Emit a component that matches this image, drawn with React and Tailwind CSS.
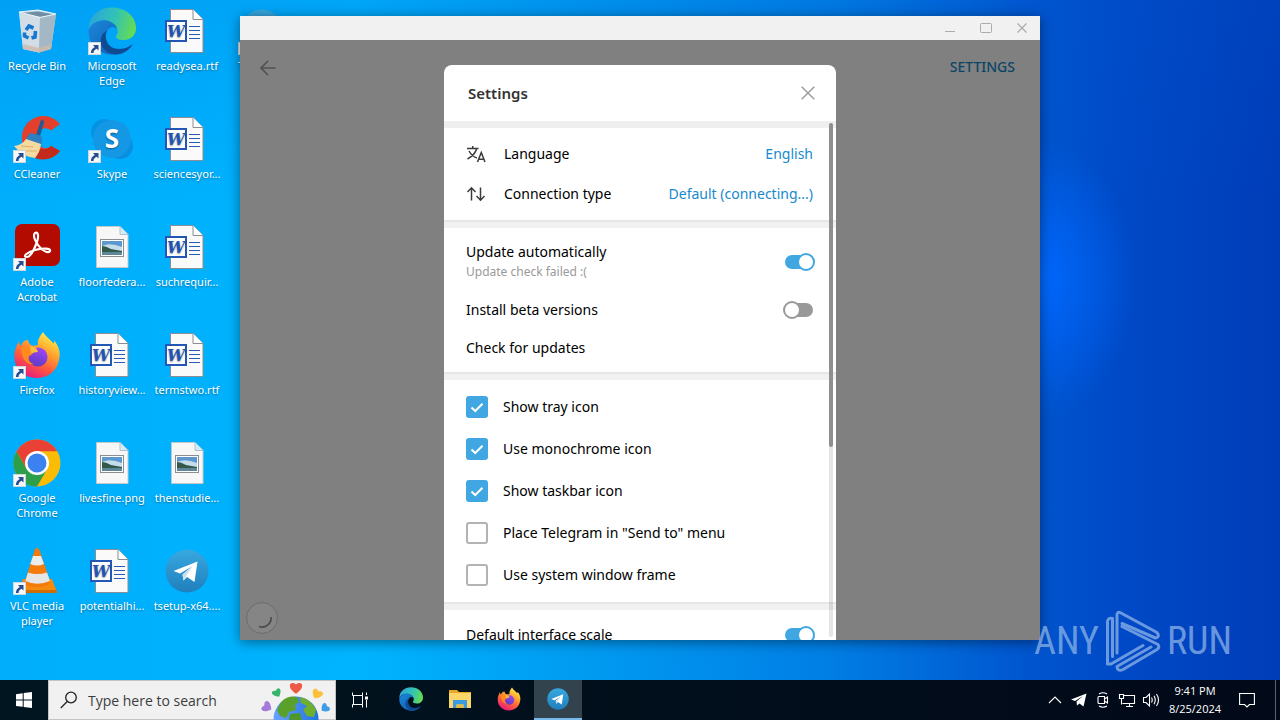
import React from 'react'

const word = (name) => ({ name, Icon: WordIcon })
const picture = (name) => ({ name, Icon: PictureIcon })

const columns = [
  [
    { name: 'Recycle Bin', Icon: RecycleIcon },
    { name: 'CCleaner', Icon: CCleanerIcon, shortcut: true },
    { name: 'Adobe Acrobat', Icon: AcrobatIcon, shortcut: true },
    { name: 'Firefox', Icon: FirefoxIcon, shortcut: true },
    { name: 'Google Chrome', Icon: ChromeIcon, shortcut: true },
    { name: 'VLC media player', Icon: VlcIcon, shortcut: true },
  ],
  [
    { name: 'Microsoft Edge', Icon: EdgeIcon, shortcut: true },
    { name: 'Skype', Icon: SkypeIcon, shortcut: true },
    picture('floorfedera...'),
    word('historyview...'),
    picture('livesfine.png'),
    word('potentialhi...'),
  ],
  [
    word('readysea.rtf'),
    word('sciencesyor...'),
    word('suchrequir...'),
    word('termstwo.rtf'),
    picture('thenstudie...'),
    { name: 'tsetup-x64....', Icon: TelegramIcon },
  ],
  [{ name: 'Telegram', Icon: TelegramIcon, shortcut: true }],
]

const checks = [
  { id: 'tray', label: 'Show tray icon', on: true },
  { id: 'mono', label: 'Use monochrome icon', on: true },
  { id: 'taskbar', label: 'Show taskbar icon', on: true },
  { id: 'sendto', label: 'Place Telegram in "Send to" menu', on: false },
  { id: 'frame', label: 'Use system window frame', on: false },
]

function RecycleIcon() {
  return (
    <svg viewBox="0 0 48 48" className="size-full">
      <path d="M6 5 L25 3 L43 7 L38 42 L26 45.500 L10 42 Z" fill="#b9d3e4" />
      <path d="M6 5 L27 10 L26 45.500 L10 42 Z" fill="#d3dde5" />
      <path d="M27 10 L43 7 L38 42 L26 45.500 Z" fill="#a3b7c5" />
      <path d="M8 6 L25 4.500 L41 7.500 L27 10 Z" fill="#6f8ea3" />
      <path d="M6 5 L25 3 L43 7 L27 10.500 Z" fill="none" stroke="#e8f3fa" strokeWidth="1.200" />
      <path d="M10 37 L26 41 L38.500 37 L38 42 L26 45.500 L10.500 42 Z" fill="#cdb9aa" opacity=".8" />
      <g fill="none" stroke="#1677d2" strokeWidth="3.600">
        <path d="M13 23 L16 19 L20.500 21" />
        <path d="M22.500 24 L22 30 L18.500 31" />
        <path d="M15.500 31 L11.500 29 L11.500 25.500" />
      </g>
    </svg>
  )
}

function CCleanerIcon() {
  return (
    <svg viewBox="0 0 48 48" className="size-full">
      <path d="M47 9 A 21.500 21.500 0 1 0 47 36 L38 31 A 9 10 0 1 1 38 15.500 Z" fill="#e2402c" />
      <path d="M47 36 A 21.500 21.500 0 0 1 22 43 L28 34 A 10.500 10.500 0 0 0 38 31 Z" fill="#c22a1c" />
      <path d="M28 5 L31.500 6 L27 21 L23 20 Z" fill="#1d5c96" />
      <path d="M18 18 L28 21 Q30 25 28 30 L13 25 Q14 20 18 18 Z" fill="#2f7fc0" />
      <path d="M13 24 L28 29 Q27 37 22 43 Q10 42 1 31 Q9 30 13 24 Z" fill="#f4d9a0" />
      <path d="M8 31 L20 32 M12 36 L24 36" stroke="#d9b36c" strokeWidth="1" />
    </svg>
  )
}

function AcrobatIcon() {
  return (
    <svg viewBox="0 0 48 48" className="size-full">
      <rect x="2" y="1" width="45" height="42" rx="7" fill="#b30b00" />
      <path
        d="M22 10 C25 8 26 13 24 19 C21 27 17 34 14 34 C9 34 14 29 22 27 C30 25 38 25 37 28 C36 31 29 28 25 22 C21 16 20 12 22 10 Z"
        fill="none"
        stroke="#fff"
        strokeWidth="2.200"
      />
    </svg>
  )
}

function FirefoxIcon() {
  return (
    <svg viewBox="0 0 48 48" className="size-full">
      <defs>
        <linearGradient id="ffBody" x1=".8" y1="0" x2=".25" y2="1">
          <stop offset="0" stopColor="#fff44f" />
          <stop offset=".35" stopColor="#ffa82e" />
          <stop offset=".65" stopColor="#ff5a3c" />
          <stop offset="1" stopColor="#e31587" />
        </linearGradient>
        <linearGradient id="ffCore" x1=".7" y1="0" x2=".3" y2="1">
          <stop offset="0" stopColor="#a045f5" />
          <stop offset="1" stopColor="#5b3bc4" />
        </linearGradient>
      </defs>
      <path
        d="M30 1 C33 6 37 8 40 12 C42 13 41 10 41 9 C46 16 48 21 46 29 C44 40 35 47 24 47 C11 47 2 38 1.500 27 C1 20 3 17 4 14 L6 10 C6 13 7 14 8 15 C9 11 12 9 15 9 C15 11 17 14 20 15 L25 14 C24 9 27 5 30 1 Z"
        fill="url(#ffBody)"
      />
      <circle cx="25" cy="26" r="9.500" fill="url(#ffCore)" />
      <path d="M8 17 C14 14 20 16 24 20 C20 20 20 24 16 25 C14 29 17 32 21 33 C14 34 9 29 8 17 Z" fill="#ff8a1e" />
      <path d="M17 15 C23 16 24 18 25 21 L18 22 Z" fill="#ffbd3d" />
    </svg>
  )
}

function ChromeIcon() {
  return (
    <svg viewBox="0 0 48 48" className="size-full">
      <circle cx="24" cy="24" r="23.500" fill="#fbbc05" />
      <path d="M3.600 12.200 A23.500 23.500 0 0 0 24 47.500 L34.200 29.900 L24 24 L13.800 29.900 Z" fill="#2d9f4a" />
      <path d="M3.600 12.200 A23.500 23.500 0 0 1 44.400 12.300 L24 12.300 L13.800 29.900 Z" fill="#e94235" />
      <circle cx="24" cy="24" r="12" fill="#fff" />
      <circle cx="24" cy="24" r="9.500" fill="#3b82f0" />
    </svg>
  )
}

function VlcIcon() {
  return (
    <svg viewBox="0 0 48 48" className="size-full">
      <path d="M10 32 L39 32 L44 45 L5 45 Z" fill="#f58a0c" />
      <path d="M5 43 L44 43 L44 46 L5 46 Z" fill="#cf6c05" />
      <path d="M22 2 Q24 0 26 2 L37 34 Q37 40 24 40 Q11 40 12 34 Z" fill="#f47b0a" />
      <path d="M20 9 L28 9 L31 17 Q24 20 17.300 17 Z" fill="#ededed" />
      <path d="M15 25.500 Q24 28.500 34 25.500 L37 34 Q24 39.500 12.300 34 Z" fill="#e5e5e5" />
    </svg>
  )
}

function EdgeIcon() {
  return (
    <svg viewBox="0 0 48 48" className="size-full">
      <defs>
        <linearGradient id="edgeTop" x1="0" y1=".3" x2="1" y2=".5">
          <stop offset="0" stopColor="#2aa5dc" />
          <stop offset=".55" stopColor="#33c3b4" />
          <stop offset="1" stopColor="#66dc50" />
        </linearGradient>
        <linearGradient id="edgeLow" x1="0" y1="0" x2="1" y2="1">
          <stop offset="0" stopColor="#1b86d8" />
          <stop offset="1" stopColor="#0e5eb4" />
        </linearGradient>
      </defs>
      <path d="M0.500 22 C1 9 11 0.500 24 0.500 C38 0.500 48 10 48 21 C48 29 42 33 36 33 C30 33 27 31 28 29 C31 26 30 20 24 16 C16 11 5 14 0.500 22 Z" fill="url(#edgeTop)" />
      <path d="M0.500 23 C4 14 16 11 23 15 C27 17 29 20 29 22 C24 17 18 22 18 29 C18 38 27 47 36 45 C22 52 0 44 0.500 23 Z" fill="url(#edgeLow)" />
      <path d="M19 24 C15 31 20 42 31 42 C38 42 42 39 44.500 37 C42 43 36 47 28 47.500 C18 47 11 39 13 31 C14 27 16 25 19 24 Z" fill="#0f4b93" />
    </svg>
  )
}

function SkypeIcon() {
  return (
    <svg viewBox="0 0 48 48" className="size-full">
      <circle cx="16" cy="17" r="13" fill="#0592e3" />
      <circle cx="32" cy="31" r="13" fill="#0a8fe0" />
      <circle cx="24" cy="24" r="19" fill="#1498e6" />
      <text x="24" y="33" textAnchor="middle" fontSize="26" fontWeight="700" fill="#fff" fontFamily="Open Sans, sans-serif">
        S
      </text>
    </svg>
  )
}

function WordIcon() {
  return (
    <svg viewBox="0 0 48 48" className="size-full">
      <path d="M7.500 2.500 H30 L40 12.500 V45.500 H7.500 Z" fill="#fafafa" stroke="#8a8d92" />
      <path d="M30 2.500 V12.500 H40" fill="#fff" stroke="#8a8d92" />
      <path d="M26 19.500 H37 M26 23.500 H37 M26 27.500 H37 M26 31.500 H37" stroke="#2c5ab4" strokeWidth="1.200" />
      <rect x="3" y="14" width="20" height="20" fill="#fff" stroke="#2457b4" strokeWidth="2" />
      <text x="13" y="30" textAnchor="middle" fontSize="16" fontWeight="700" fontStyle="italic" fill="#2253b0" fontFamily="DejaVu Serif, serif">
        W
      </text>
    </svg>
  )
}

function PictureIcon() {
  return (
    <svg viewBox="0 0 48 48" className="size-full">
      <path d="M8.500 3.500 H32 L40 11.500 V44.500 H8.500 Z" fill="#f7f7f7" stroke="#c5c8cb" />
      <path d="M32 3.500 V11.500 H40" fill="#d5e9f7" stroke="#b3c0c9" />
      <rect x="12.500" y="16.500" width="23" height="17" fill="#fff" stroke="#8a8f94" />
      <rect x="14" y="18" width="20" height="14" fill="#5d97cf" />
      <path d="M14 23 Q22 19 34 24 V28 H14 Z" fill="#c5ddeb" />
      <path d="M14 23 Q18 23 23 26 L34 28 V29 H14 Z" fill="#33594a" />
      <path d="M14 29 H34 V32 H14 Z" fill="#5f8798" />
    </svg>
  )
}

function TelegramIcon() {
  return (
    <svg viewBox="0 0 48 48" className="size-full">
      <defs>
        <linearGradient id="tgFill" x1="0" y1="0" x2="0" y2="1">
          <stop offset="0" stopColor="#38a8e0" />
          <stop offset="1" stopColor="#1f7fbd" />
        </linearGradient>
      </defs>
      <circle cx="24" cy="24" r="21.500" fill="url(#tgFill)" />
      <path d="M10.500 24 L34.500 14.500 L31.500 35 L24 30 L20.500 33.500 L19.500 27.500 L29 19.500 L17 26.500 Z" fill="#fff" />
      <path d="M19.500 27.500 L29 19.500 L23.500 28.500 L20.500 33.500 Z" fill="#c9dfee" />
    </svg>
  )
}

function ShortcutArrow() {
  return (
    <svg viewBox="0 0 13 13" className="absolute bottom-0 left-0 size-[13px]">
      <rect x=".5" y=".5" width="12" height="12" fill="#f6f7f8" stroke="#cfd6dc" />
      <path d="M5 3 H10.500 V8.500 L8.700 6.800 Q5.500 8 5.500 11 H3 Q2.700 7 6.800 5 Z" fill="#274c94" />
    </svg>
  )
}

function DesktopIcon({ name, Icon, shortcut }) {
  return (
    <button className="flex h-[108px] flex-col items-center pt-[7px] pr-[3px] pl-0.5 text-[11px] leading-[15px] text-white [text-shadow:0_1px_2px_rgba(0,0,0,0.4)]">
      <span className="relative block size-12 shrink-0">
        <Icon />
        {shortcut && <ShortcutArrow />}
      </span>
      <span className="mt-[3px] block w-full">{name}</span>
    </button>
  )
}

function Switch({ id, on }) {
  return (
    <input
      id={id}
      type="checkbox"
      role="switch"
      defaultChecked={on}
      className="relative h-3.5 w-7 shrink-0 appearance-none rounded-full bg-[#999999] before:absolute before:-top-0.5 before:-left-0.5 before:size-[18px] before:rounded-full before:border-2 before:border-[#999999] before:bg-white checked:bg-[#40a7e3] checked:before:left-3 checked:before:border-[#40a7e3]"
    />
  )
}

function CheckRow({ id, label, on }) {
  return (
    <label htmlFor={id} className="flex h-[42px] items-center gap-[15px]">
      <span className="relative block size-[22px]">
        <input
          id={id}
          type="checkbox"
          defaultChecked={on}
          className="peer block size-[22px] appearance-none rounded-[3px] border-2 border-[#b3b3b3] bg-white checked:border-[#40a7e3] checked:bg-[#40a7e3]"
        />
        <svg viewBox="0 0 22 22" className="pointer-events-none absolute inset-0 hidden peer-checked:block">
          <path d="M5.500 11.500 L9.200 15 L16.500 7.700" fill="none" stroke="#fff" strokeWidth="2" />
        </svg>
      </span>
      {label}
    </label>
  )
}

function Divider() {
  return <div className="h-2 border-t-2 border-[#e6e6e6] bg-[#f1f1f1]" />
}

function LinkRow({ label, value, children }) {
  return (
    <button className="flex h-10 w-full items-center text-left">
      <svg viewBox="0 0 20 20" className="mr-[18px] size-5" fill="none" stroke="#3c3c3c" strokeWidth="1.500">
        {children}
      </svg>
      <span className="flex-1">{label}</span>
      <span className="text-[#168acd]">{value}</span>
    </button>
  )
}

function SettingsBox() {
  return (
    <section className="flex w-[392px] flex-col overflow-hidden rounded-t-lg bg-white text-[14px] leading-5 text-black">
      <header className="flex h-14 shrink-0 items-center justify-between pr-5 pl-6">
        <h1 className="text-[15px] font-semibold text-[#333333]">Settings</h1>
        <button aria-label="Close" className="p-px">
          <svg viewBox="0 0 14 14" className="size-3.5" stroke="#999" strokeWidth="1.400">
            <path d="M.7 .7 L13.300 13.300 M13.300 .7 L.7 13.300" />
          </svg>
        </button>
      </header>
      <div className="relative min-h-0 flex-1 overflow-hidden">
        <div className="h-[7px] bg-[#efefef]" />
        <div className="py-1.5 pr-[23px] pl-[22px]">
          <LinkRow label="Language" value="English">
            <path d="M1 4.500 H12.500 M6.700 2 V4.500 M3 7 Q6 12.500 11 14 M10.700 4.500 Q9 11 1.500 15 M11.500 18 L15.300 8.500 L19 18 M12.800 15.200 H17.800" />
          </LinkRow>
          <LinkRow label="Connection type" value="Default (connecting...)">
            <path d="M5.500 16.500 V4 M1.500 8 L5.500 3.800 L9.500 8 M14.500 3.500 V16 M10.500 12 L14.500 16.200 L18.500 12" />
          </LinkRow>
        </div>
        <Divider />
        <div className="pt-2 pr-[23px] pb-[5px] pl-[22px]">
          <label htmlFor="auto" className="mb-[3px] flex h-[52px] items-center justify-between">
            <span>
              Update automatically
              <span className="block text-[12px] text-[#999999]">Update check failed :(</span>
            </span>
            <Switch id="auto" on />
          </label>
          <label htmlFor="beta" className="flex h-[38px] items-center justify-between">
            Install beta versions
            <Switch id="beta" />
          </label>
          <button className="block h-[38px] w-full text-left">Check for updates</button>
        </div>
        <Divider />
        <div className="px-[22px] py-1.5">
          {checks.map((item) => (
            <CheckRow key={item.id} {...item} />
          ))}
        </div>
        <Divider />
        <div className="pt-1.5 pr-[23px] pl-[22px]">
          <label htmlFor="scale" className="flex h-[38px] items-center justify-between">
            Default interface scale
            <Switch id="scale" on />
          </label>
        </div>
        <div className="absolute top-0.5 right-[3px] bottom-[3px] w-1 rounded-full bg-black/10">
          <div className="h-[63%] rounded-full bg-[#8f8f8f]" />
        </div>
      </div>
    </section>
  )
}

function TelegramWindow() {
  return (
    <main className="absolute top-4 right-60 bottom-10 left-60 flex flex-col bg-[#808080] shadow-[0_2px_12px_rgba(0,0,0,0.45)]">
      <div className="flex h-6 shrink-0 items-center justify-end bg-[#f1f1f1]">
        <button aria-label="Minimize" className="flex w-9 justify-center">
          <svg viewBox="0 0 12 12" className="size-3" stroke="#ababab"><path d="M1 9.500 H11" /></svg>
        </button>
        <button aria-label="Maximize" className="flex w-9 justify-center">
          <svg viewBox="0 0 12 12" className="size-3" fill="none" stroke="#ababab"><rect x=".5" y="1.500" width="11" height="9" rx="1" /></svg>
        </button>
        <button aria-label="Close window" className="flex w-9 justify-center">
          <svg viewBox="0 0 12 12" className="size-3" stroke="#ababab" strokeWidth="1.200"><path d="M1.500 1.500 L10.500 10.500 M10.500 1.500 L1.500 10.500" /></svg>
        </button>
      </div>
      <div className="flex min-h-0 flex-1 justify-between">
        <div className="flex flex-1 flex-col items-start justify-between">
          <button aria-label="Back" className="px-5 py-5">
            <svg viewBox="0 0 16 16" className="size-4" fill="none" stroke="#505050" strokeWidth="1.600">
              <path d="M15.500 8 H1 M8 1 L1 8 L8 15" />
            </svg>
          </button>
          <svg viewBox="0 0 32 32" className="mb-1.5 ml-1.5 size-8" fill="none">
            <circle cx="16" cy="16" r="15.500" fill="#858585" stroke="#6c6c6c" />
            <path d="M25 15 A9 9 0 0 1 13 24.500" stroke="#4b4b4b" strokeWidth="1.600" />
          </svg>
        </div>
        <div className="flex pt-[25px]">
          <SettingsBox />
        </div>
        <div className="flex flex-1 items-start justify-end">
          <button className="mt-4 mr-[25px] text-[14px] leading-[22px] font-medium text-[#0b4566]">SETTINGS</button>
        </div>
      </div>
    </main>
  )
}

function Watermark() {
  return (
    <div className="absolute right-12 bottom-2 flex items-center gap-1.5 font-['Liberation_Sans_Narrow','Roboto_Condensed','Liberation_Sans',sans-serif] text-[38px] leading-[62px] text-[#86aee6]/80">
      <span>ANY</span>
      <svg viewBox="0 0 56 62" className="h-[62px] w-14" fill="none" stroke="currentColor" strokeWidth="3" strokeLinejoin="round" strokeLinecap="round">
        <path d="M7.500 8.500 Q2.500 7.500 2.500 12 V54 L6 54 L38 35.500 M7.500 8.500 V46.500" />
        <path d="M12 43 V5 Q12 1 16 3 L52 22.500 Q55.500 27 50.500 28 L17 13.500" />
        <path d="M17 16.500 L53 34.500 Q55 37.500 52 39.500 L18 59.500 Q12.500 62 12 56.500 L46 37" />
      </svg>
      <span>RUN</span>
    </div>
  )
}

function Globe() {
  return (
    <svg viewBox="0 0 72 40" className="mr-[3px] h-10 w-[72px]">
      <defs>
        <linearGradient id="sea" x1="0" y1="0" x2="1" y2="0">
          <stop offset="0" stopColor="#6aa2ff" />
          <stop offset="1" stopColor="#1f74e0" />
        </linearGradient>
        <path id="heart" d="M0 5 C-9 -1 -5 -7 0 -3 C5 -7 9 -1 0 5 Z" />
      </defs>
      <circle cx="36" cy="39" r="22.500" fill="url(#sea)" />
      <path d="M21 22 Q28 15 37 17 L39 22 L35 25 L36 30 L29 32 L26 38 L20 36 L17 30 Z" fill="#5aa12c" />
      <path d="M40 17 Q51 19 56 30 L54 37 L47 36 L43 30 L47 26 L41 23 Z" fill="#6faf2e" />
      <path d="M30 34 L40 33 L42 40 L29 40 Z" fill="#4f962c" />
      <use href="#heart" fill="#ef5a45" transform="translate(36 8) scale(1.150)" />
      <use href="#heart" fill="#38b56b" transform="translate(17 13) rotate(-30) scale(.85)" />
      <use href="#heart" fill="#fbc13a" transform="translate(57 14) rotate(30)" />
      <use href="#heart" fill="#a678dc" transform="translate(7 27) rotate(-60)" />
      <use href="#heart" fill="#3f9de8" transform="translate(65 28) rotate(50) scale(.85)" />
    </svg>
  )
}

function TaskButton({ label, active, children }) {
  return (
    <button
      aria-label={label}
      className={`flex w-12 items-center justify-center border-b-2 ${active ? 'border-[#76b9ed] bg-[#33434e]' : 'border-transparent'}`}
    >
      <span className="block size-6">{children}</span>
    </button>
  )
}

function TrayButton({ label, children }) {
  return (
    <button aria-label={label} className="flex w-6 items-center justify-center">
      <svg viewBox="0 0 18 18" className="size-[18px]" fill="none" stroke="#fff" strokeWidth="1.100">
        {children}
      </svg>
    </button>
  )
}

function Taskbar() {
  return (
    <footer className="flex h-10 shrink-0 bg-linear-to-r from-[#00151f] to-[#020918] text-white">
      <button aria-label="Start" className="flex w-12 items-center justify-center">
        <svg viewBox="0 0 16 16" className="size-4" fill="#fff">
          <path d="M0 2.200 L6.700 1.200 V7.500 H0 Z M7.700 1.100 L16 0 V7.500 H7.700 Z M0 8.500 H6.700 V14.800 L0 13.900 Z M7.700 8.500 H16 V16 L7.700 14.900 Z" />
        </svg>
      </button>
      <label htmlFor="search" className="flex w-72 items-center border border-[#c4c4c4] bg-[#f1f1f1] pl-[11px]">
        <svg viewBox="0 0 18 18" className="mr-2.5 size-[18px] shrink-0" fill="none" stroke="#222" strokeWidth="1.300">
          <circle cx="11" cy="6.500" r="5.300" />
          <path d="M7.200 10.500 L.8 17" />
        </svg>
        <input
          id="search"
          type="text"
          aria-label="Search"
          placeholder="Type here to search"
          className="w-0 flex-1 bg-transparent font-['Open_Sans',sans-serif] text-[14px] text-black outline-none placeholder:text-[#3d3d3d]"
        />
        <Globe />
      </label>
      <div className="flex gap-px">
        <button aria-label="Task View" className="mr-0.5 flex w-12 items-center justify-center">
          <svg viewBox="0 0 16 16" className="size-4" fill="none" stroke="#fff">
            <path d="M.5 .500 V3.500 H10.500 V.5 M.5 15.500 V12.500 H10.500 V15.500 M1.500 3.500 V12.500 M10.500 3.500 V12.500 M14.500 .500 V3 M14.500 8 V15.500" />
            <rect x="13" y="4.500" width="3" height="3" fill="#fff" stroke="none" />
          </svg>
        </button>
        <TaskButton label="Microsoft Edge"><EdgeIcon /></TaskButton>
        <TaskButton label="File Explorer">
          <svg viewBox="0 0 24 24" className="size-full">
            <path d="M1 3 H9 L11 5 H23 V21 H1 Z" fill="#e8a724" />
            <path d="M1 6 H23 V21 H1 Z" fill="#fbd568" />
            <path d="M5 13 H19 V21 H15.500 V17.500 H8.500 V21 H5 Z" fill="#3b9be0" />
            <path d="M8.500 17.500 H15.500 V21 H8.500 Z" fill="#e8b93f" />
          </svg>
        </TaskButton>
        <TaskButton label="Firefox"><FirefoxIcon /></TaskButton>
        <TaskButton label="Telegram" active><TelegramIcon /></TaskButton>
      </div>
      <div className="ml-auto flex">
        <TrayButton label="Show hidden icons"><path d="M3 12 L9 6 L15 12" /></TrayButton>
        <TrayButton label="Telegram tray">
          <path d="M1 8.500 L16.500 2.500 L13.500 15.500 L9.500 12.500 L7 14.500 L6.500 10.500 L13 5 L5 10 Z" fill="#fff" stroke="none" />
        </TrayButton>
        <TrayButton label="Meet Now">
          <path d="M5 3 Q9 .5 13 3 M5 15 Q9 17.500 13 15 M5 5.500 H10.500 V12.500 H5 Q4 12.500 4 11.500 V6.500 Q4 5.500 5 5.500 Z M10.500 8 L13.500 6 V12 L10.500 10" />
        </TrayButton>
        <TrayButton label="Network">
          <path d="M5.500 4.500 H16.500 V12.500 H4.500 M1.500 3.500 H5.500 V7.500 H1.500 Z M3.500 7.500 V13.500 M11.500 12.500 V15.500 M8 15.500 H15" />
        </TrayButton>
        <TrayButton label="Volume">
          <path d="M1.500 6.500 H4 L7.500 3 V15 L4 11.500 H1.500 Z M9.500 6.500 Q11 9 9.500 11.500 M12 4.800 Q14.500 9 12 13.200 M14.500 3 Q18.500 9 14.500 15" />
        </TrayButton>
        <button className="w-16 text-center font-['Open_Sans',sans-serif] text-[11px] leading-[18px]">
          <span className="block">9:41 PM</span>
          <span className="block">8/25/2024</span>
        </button>
        <button aria-label="Notifications" className="mr-2 flex w-10 items-center justify-center">
          <svg viewBox="0 0 16 16" className="size-4" fill="none" stroke="#fff" strokeWidth="1.100">
            <path d="M.6 1.500 H15.400 V12.500 H10.500 L8 15 L5.500 12.500 H.6 Z" />
          </svg>
        </button>
        <button aria-label="Show desktop" className="w-[5px] border-l border-[#5a6070]" />
      </div>
    </footer>
  )
}

function App() {
  return (
    <div className="flex h-screen flex-col overflow-hidden font-['Noto_Sans','Open_Sans',sans-serif]">
      <div className="relative flex-1 bg-[radial-gradient(ellipse_100px_140px_at_81%_41%,#0068ff,transparent),linear-gradient(to_bottom,rgba(0,90,210,0.16),transparent_30%),linear-gradient(to_right,#00aefc_0%,#00b4ff_28%,#009cf2_45%,#007ee4_65%,#0056cf_80%,#0049c6_88%,#003cb8_100%)]">
        <div className="flex">
          {columns.map((items, i) => (
            <div key={i} className="flex w-[75px] flex-col">
              {items.map((item) => (
                <DesktopIcon key={item.name} {...item} />
              ))}
            </div>
          ))}
        </div>
        <TelegramWindow />
        <Watermark />
      </div>
      <Taskbar />
    </div>
  )
}

export default App
